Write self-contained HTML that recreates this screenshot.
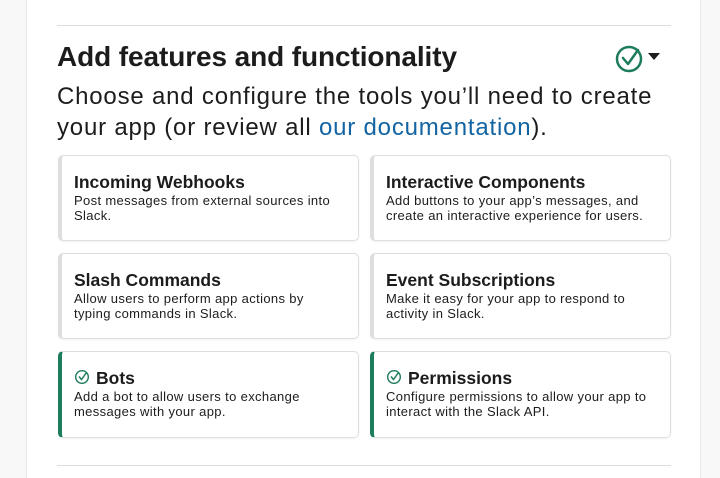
<!DOCTYPE html>
<html><head><style>
*{box-sizing:border-box;margin:0;padding:0}
body{width:720px;height:469px;background:#f8f8f8;font-family:"Liberation Sans",sans-serif;color:#1d1c1d;position:relative;overflow:hidden}
.panel{position:absolute;left:26px;top:-2px;width:675px;height:480px;background:#fff;border-left:1px solid #e8e8e8;border-right:1px solid #e8e8e8}
.hr{position:absolute;left:57px;width:614px;height:1px;background:#dddddd}
h1{position:absolute;left:57px;top:41px;font-size:28px;font-weight:bold;letter-spacing:-0.1px;white-space:nowrap}
.lead{position:absolute;left:57px;top:81px;font-size:24px;line-height:31px;white-space:nowrap;letter-spacing:0.8px}
.lead a{color:#1264a3;text-decoration:none}
.card{position:absolute;width:301px;height:86px;border:1px solid #dedede;border-left:4px solid #dedede;border-radius:5px;padding:16px 0 0 12px;box-shadow:0 1px 2px rgba(0,0,0,.05)}
.card.on{border-left-color:#1d7c5c}
.card h3{font-size:17.5px;font-weight:bold;line-height:20px;letter-spacing:0;white-space:nowrap}
.card p{font-size:13px;line-height:15px;margin-top:1px;white-space:nowrap;letter-spacing:0.35px}
.ck{display:inline-block;vertical-align:-1px;margin-right:6px}
</style></head><body>
<div class="panel"></div>
<div class="hr" style="top:25px"></div>
<div class="hr" style="top:465px"></div>
<h1>Add features and functionality</h1>
<svg style="position:absolute;left:615px;top:45px" width="50" height="28" viewBox="0 0 50 28">
<circle cx="14" cy="14" r="12" fill="none" stroke="#1d7c5c" stroke-width="2.5"/>
<path d="M8 13 L13 19 L23 5" fill="none" stroke="#1d7c5c" stroke-width="2.5" stroke-linecap="round" stroke-linejoin="round"/>
<path d="M33 8 L45 8 L39 15 Z" fill="#1d1c1d"/>
</svg>
<div class="lead">Choose and configure the tools you’ll need to create<br>your app (or review all <a>our documentation</a>).</div>

<div class="card" style="left:58px;top:155px"><h3>Incoming Webhooks</h3><p>Post messages from external sources into<br>Slack.</p></div>
<div class="card" style="left:370px;top:155px"><h3>Interactive Components</h3><p>Add buttons to your app’s messages, and<br>create an interactive experience for users.</p></div>
<div class="card" style="left:58px;top:253px"><h3>Slash Commands</h3><p>Allow users to perform app actions by<br>typing commands in Slack.</p></div>
<div class="card" style="left:370px;top:253px"><h3>Event Subscriptions</h3><p>Make it easy for your app to respond to<br>activity in Slack.</p></div>
<div class="card on" style="left:58px;top:351px;height:87px"><h3><svg class="ck" width="16" height="16" viewBox="0 0 16 16"><circle cx="8" cy="8" r="6.3" fill="none" stroke="#1d7c5c" stroke-width="1.4"/><path d="M5 7.5 L7.5 10.5 L12.5 3.5" fill="none" stroke="#1d7c5c" stroke-width="1.5"/></svg>Bots</h3><p>Add a bot to allow users to exchange<br>messages with your app.</p></div>
<div class="card on" style="left:370px;top:351px;height:87px"><h3><svg class="ck" width="16" height="16" viewBox="0 0 16 16"><circle cx="8" cy="8" r="6.3" fill="none" stroke="#1d7c5c" stroke-width="1.4"/><path d="M5 7.5 L7.5 10.5 L12.5 3.5" fill="none" stroke="#1d7c5c" stroke-width="1.5"/></svg>Permissions</h3><p>Configure permissions to allow your app to<br>interact with the Slack API.</p></div>
</body></html>
